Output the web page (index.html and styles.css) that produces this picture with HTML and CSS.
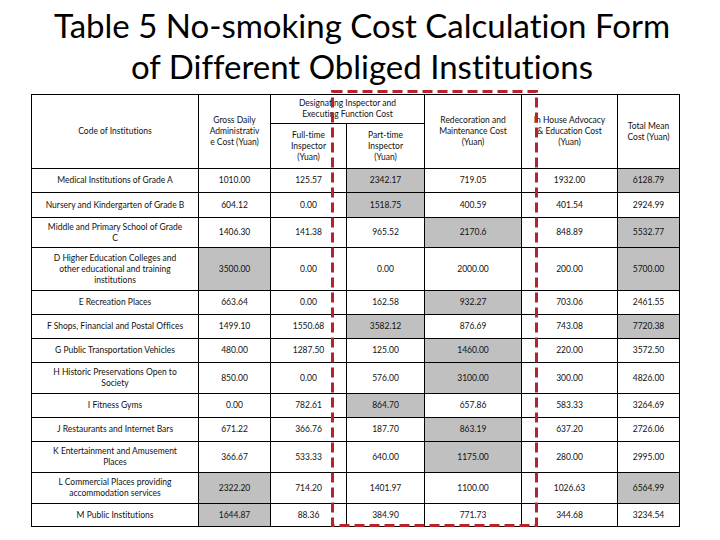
FILE: index.html
```html
<!DOCTYPE html>
<html>
<head>
<meta charset="utf-8">
<link rel="stylesheet" href="styles.css">
</head>
<body>
<div class="page">
  <h1 class="title">Table 5 No-smoking Cost Calculation Form<br>of Different Obliged Institutions</h1>
  <div class="table-wrap">
    <table class="cost">
      <colgroup>
        <col class="c-code"><col class="c-gross"><col class="c-full"><col class="c-part"><col class="c-redec"><col class="c-adv"><col class="c-total">
      </colgroup>
      <tr class="h1">
        <td rowspan="2">Code of Institutions</td>
        <td rowspan="2">Gross Daily<br>Administrativ<br>e Cost (Yuan)</td>
        <td colspan="2">Designating Inspector and<br>Executing Function Cost</td>
        <td rowspan="2">Redecoration and<br>Maintenance Cost<br>(Yuan)</td>
        <td rowspan="2">In House Advocacy<br>&amp; Education Cost<br>(Yuan)</td>
        <td rowspan="2">Total Mean<br>Cost (Yuan)</td>
      </tr>
      <tr class="h2">
        <td>Full-time<br>Inspector<br>(Yuan)</td>
        <td>Part-time<br>Inspector<br>(Yuan)</td>
      </tr>
      <tr class="r24"><td>Medical Institutions of Grade A</td><td>1010.00</td><td>125.57</td><td class="g">2342.17</td><td>719.05</td><td>1932.00</td><td class="g">6128.79</td></tr>
      <tr class="r25"><td>Nursery and Kindergarten of Grade B</td><td>604.12</td><td>0.00</td><td class="g">1518.75</td><td>400.59</td><td>401.54</td><td>2924.99</td></tr>
      <tr class="r30"><td>Middle and Primary School of Grade<br>C</td><td>1406.30</td><td>141.38</td><td>965.52</td><td class="g">2170.6</td><td>848.89</td><td class="g">5532.77</td></tr>
      <tr class="r43"><td>D Higher Education Colleges and<br>other educational and training<br>institutions</td><td class="g">3500.00</td><td>0.00</td><td>0.00</td><td>2000.00</td><td>200.00</td><td class="g">5700.00</td></tr>
      <tr class="r24"><td>E Recreation Places</td><td>663.64</td><td>0.00</td><td>162.58</td><td class="g">932.27</td><td>703.06</td><td>2461.55</td></tr>
      <tr class="r24"><td>F Shops, Financial and Postal Offices</td><td>1499.10</td><td>1550.68</td><td class="g">3582.12</td><td>876.69</td><td>743.08</td><td class="g">7720.38</td></tr>
      <tr class="r24"><td>G Public Transportation Vehicles</td><td>480.00</td><td>1287.50</td><td>125.00</td><td class="g">1460.00</td><td>220.00</td><td>3572.50</td></tr>
      <tr class="r31"><td>H Historic Preservations Open to<br>Society</td><td>850.00</td><td>0.00</td><td>576.00</td><td class="g">3100.00</td><td>300.00</td><td>4826.00</td></tr>
      <tr class="r24"><td>I Fitness Gyms</td><td>0.00</td><td>782.61</td><td class="g">864.70</td><td>657.86</td><td>583.33</td><td>3264.69</td></tr>
      <tr class="r24"><td>J Restaurants and Internet Bars</td><td>671.22</td><td>366.76</td><td>187.70</td><td class="g">863.19</td><td>637.20</td><td>2726.06</td></tr>
      <tr class="r31"><td>K Entertainment and Amusement<br>Places</td><td>366.67</td><td>533.33</td><td>640.00</td><td class="g">1175.00</td><td>280.00</td><td>2995.00</td></tr>
      <tr class="r31"><td>L Commercial Places providing<br>accommodation services</td><td class="g">2322.20</td><td>714.20</td><td>1401.97</td><td>1100.00</td><td>1026.63</td><td class="g">6564.99</td></tr>
      <tr class="r23"><td>M Public Institutions</td><td class="g">1644.87</td><td>88.36</td><td>384.90</td><td>771.73</td><td>344.68</td><td>3234.54</td></tr>
    </table>
    <svg class="dash-box" width="209" height="440" viewBox="0 0 209 440">
      <rect x="1.5" y="1.5" width="204" height="434" fill="none" stroke="#b8232b" stroke-width="3" stroke-dasharray="10 5"/>
    </svg>
  </div>
</div>
</body>
</html>
```

FILE: styles.css
```css
html, body {
  margin: 0;
  padding: 0;
  background: #fff;
}
.page {
  width: 720px;
  height: 540px;
  overflow: hidden;
  font-family: Lato, "Liberation Sans", sans-serif;
  font-variant-ligatures: none;
  color: #111;
}
.title {
  margin: 0;
  padding: 5px 0 0 4px;
  height: 89px;
  box-sizing: border-box;
  text-align: center;
  font-weight: normal;
  font-size: 33px;
  line-height: 41px;
  color: #000;
}
.table-wrap {
  position: relative;
  margin: 0 0 0 31px;
  width: 650px;
  padding-top: 5px;
}
.cost {
  border-collapse: collapse;
  table-layout: fixed;
  width: 648px;
  font-size: 8.5px;
  line-height: 11px;
}
.cost td {
  border: 1px solid #000;
  padding: 0 1px;
  text-align: center;
  vertical-align: middle;
  white-space: nowrap;
  overflow: hidden;
}
.cost td.g {
  background: #c0c0c0;
}
.c-code { width: 167px; }
.c-gross { width: 72px; }
.c-full { width: 76px; }
.c-part { width: 78px; }
.c-redec { width: 97px; }
.c-adv { width: 96px; }
.c-total { width: 62px; }
.h1 { height: 29px; }
.h2 { height: 45px; }
.r23 { height: 23px; }
.r24 { height: 24px; }
.r25 { height: 25px; }
.r30 { height: 30px; }
.r31 { height: 31px; }
.r43 { height: 43px; }
.dash-box {
  position: absolute;
  left: 300px;
  top: 1px;
}
```
